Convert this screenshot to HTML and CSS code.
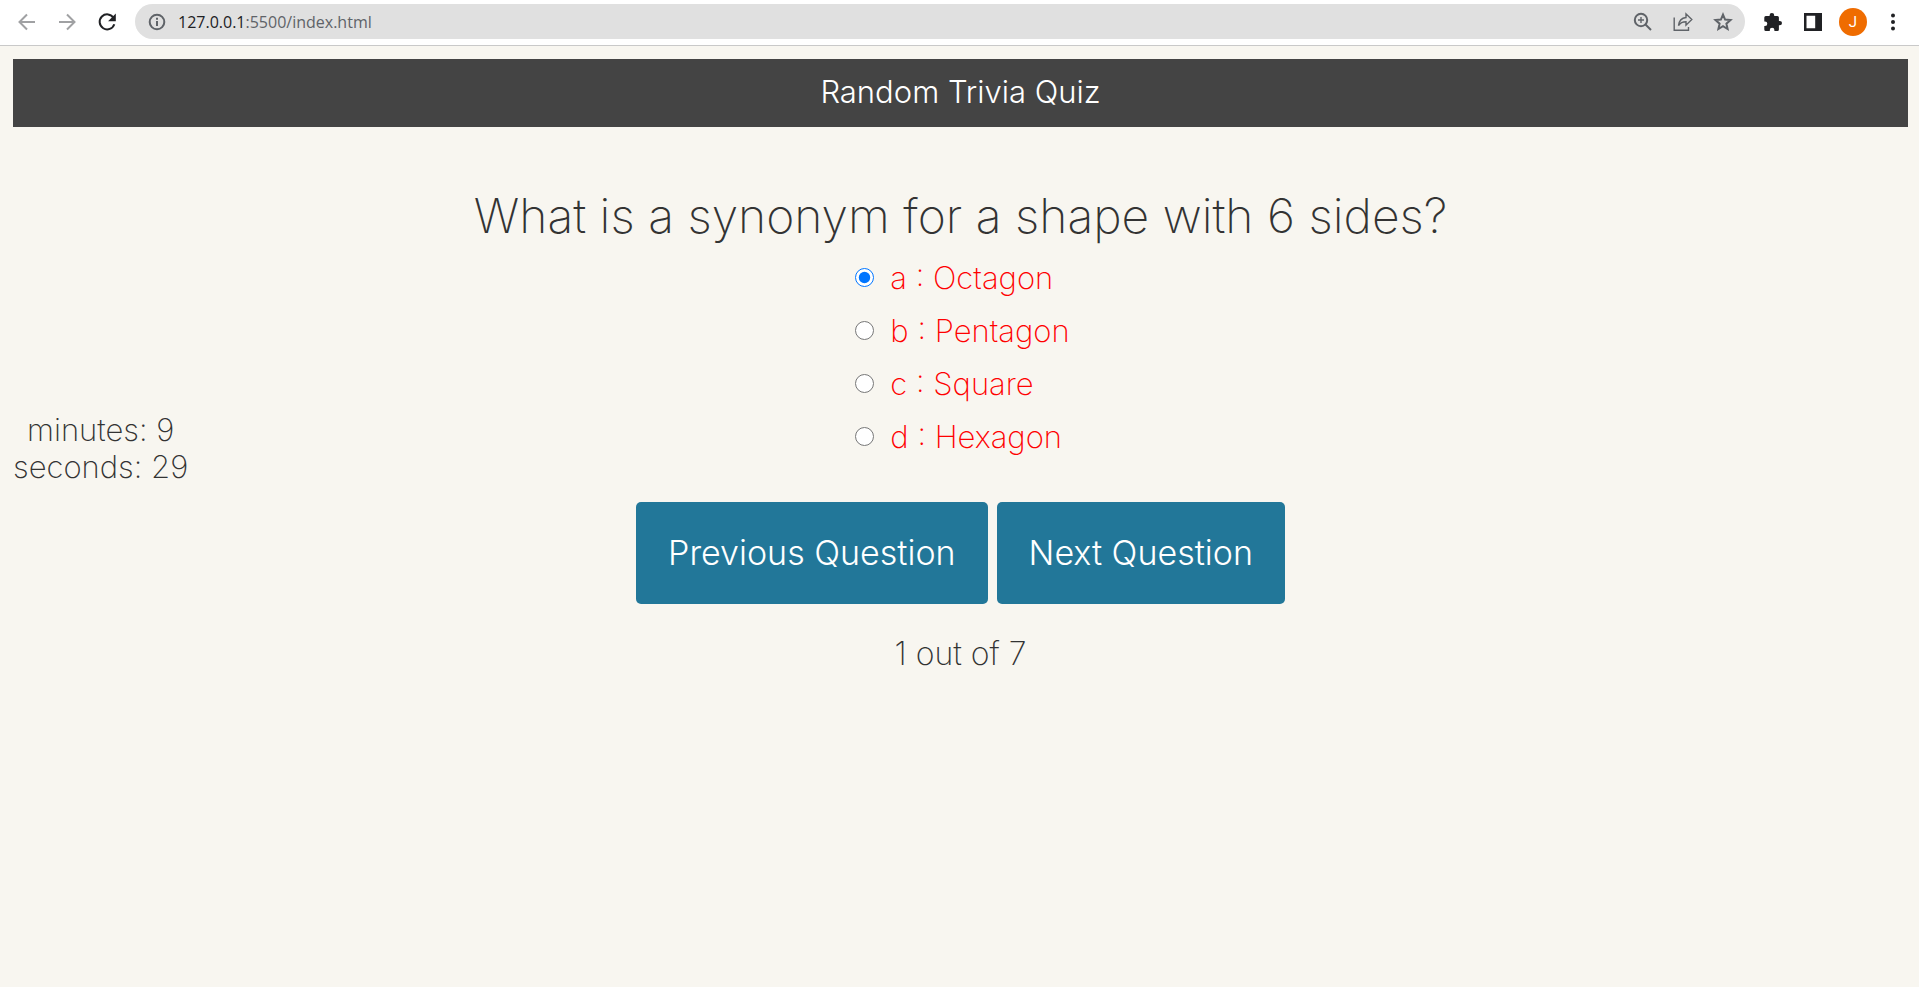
FILE: index.html
```html
<!DOCTYPE html>
<html lang="en">
<head>
<meta charset="utf-8">
<title>Random Trivia Quiz</title>
<link rel="stylesheet" href="styles.css">
</head>
<body>
<div class="toolbar">
  <button class="tool" aria-label="Back"><svg class="muted" viewBox="0 0 20 20"><path d="M18 10H3M10 2.500L2.500 10l7.500 7.500"/></svg></button>
  <button class="tool" aria-label="Forward"><svg class="muted" viewBox="0 0 20 20"><path d="M2 10h15M10 2.500l7.500 7.500-7.500 7.500"/></svg></button>
  <button class="tool" aria-label="Reload"><svg class="dark" viewBox="0 0 20 20"><path d="M16.600 6A7.500 7.500 0 1 0 17.300 12.200"/><path class="solid" d="M18.800 1.500v7.700h-7.700z"/></svg></button>
  <div class="address">
    <button class="inner" aria-label="Site information"><svg viewBox="0 0 20 20"><circle cx="10" cy="10" r="7.300"/><path d="M10 9v5M10 5.800v2"/></svg></button>
    <span class="url"><span class="host">127.0.0.1</span>:5500/index.html</span>
    <button class="inner" aria-label="Zoom"><svg viewBox="0 0 20 20"><circle cx="8" cy="8" r="6.200"/><path d="M12.500 12.500l5.500 5.500"/><path class="thin" d="M5 8h6M8 5v6"/></svg></button>
    <button class="inner" aria-label="Share"><svg class="fine" viewBox="0 0 20 20"><path d="M1.200 5.500v12.800h14.300V15M5.500 13.500c.6-5 3-7.500 7.500-8V1.800l5.800 5.700-5.800 5.700V9.800c-3.500 0-5.700 1-7.500 3.700z"/></svg></button>
    <button class="inner" aria-label="Bookmark"><svg viewBox="0 0 20 20"><path d="M10 2.600l2.100 5 5.400.5-4.100 3.600 1.200 5.300-4.600-2.800L5.400 17l1.200-5.300-4.100-3.600 5.400-.5z"/></svg></button>
  </div>
  <button class="tool" aria-label="Extensions"><svg class="fill" viewBox="0 0 20 20"><path d="M2.800 4H6.600V3.200a2.300 2.300 0 0 1 4.600 0V4H14.400a1.500 1.500 0 0 1 1.500 1.500v3.400h.9a2.200 2.200 0 0 1 0 4.400h-.9v4.200a1.500 1.500 0 0 1-1.500 1.500h-3V18a2.200 2.200 0 0 0-4.600 0v1H2.800a1.500 1.500 0 0 1-1.500-1.500v-3.500H2a2.300 2.300 0 0 0 0-4.600h-.7V5.500A1.500 1.500 0 0 1 2.800 4z"/></svg></button>
  <button class="tool" aria-label="Side panel"><svg class="fill" viewBox="0 0 20 20"><path fill-rule="evenodd" d="M1 1h18v18H1zM3.500 3.800v12.400h8.700V3.800z"/></svg></button>
  <button class="tool avatar" aria-label="Profile">J</button>
  <button class="tool" aria-label="Menu"><svg class="fill" viewBox="0 0 20 20"><circle cx="10" cy="3.500" r="2"/><circle cx="10" cy="10" r="2"/><circle cx="10" cy="16.500" r="2"/></svg></button>
</div>
<div class="page">
  <header class="banner">Random Trivia Quiz</header>
  <main class="quiz">
    <div class="timer"><div>minutes: 9</div><div>seconds: 29</div></div>
    <div class="content">
      <h1 class="question">What is a synonym for a shape with 6 sides?</h1>
      <form class="answers">
        <label class="answer"><input type="radio" name="answer" value="a" checked>a : Octagon</label>
        <label class="answer"><input type="radio" name="answer" value="b">b : Pentagon</label>
        <label class="answer"><input type="radio" name="answer" value="c">c : Square</label>
        <label class="answer"><input type="radio" name="answer" value="d">d : Hexagon</label>
      </form>
      <div class="actions">
        <button class="nav">Previous Question</button>
        <button class="nav">Next Question</button>
      </div>
      <div class="counter">1 out of 7</div>
    </div>
  </main>
</div>
</body>
</html>
```
FILE: styles.css
```css
* { box-sizing: border-box; }

body {
  margin: 0;
  min-height: 100vh;
  background: #f8f6f0;
  color: #333;
  font: 200 31px/37px Inter, "Liberation Sans", sans-serif;
}

button {
  border: 0;
  padding: 0;
  background: none;
  color: inherit;
  font: inherit;
}

.toolbar {
  display: flex;
  align-items: center;
  gap: 12px;
  height: 46px;
  padding: 0 12px 2px 13px;
  background: #fff;
  border-bottom: 1px solid #c9c9c9;
}

.tool {
  display: flex;
  align-items: center;
  justify-content: center;
  flex: none;
  width: 28px;
  height: 28px;
}

svg {
  width: 20px;
  height: 20px;
  fill: none;
  stroke: #5f6368;
  stroke-width: 2;
}
.muted { stroke: #a0a1a3; }
.dark { stroke: #202124; }
.fine { stroke-width: 1.4; }
.thin { stroke-width: 1.4; }
.solid { fill: #202124; stroke: none; }
.fill { fill: #202124; stroke: none; }

.address {
  display: flex;
  align-items: center;
  flex: 1;
  gap: 20px;
  height: 35px;
  margin: 0 2px;
  padding: 0 12px;
  border-radius: 18px;
  background: #e0e0e0;
}

.inner {
  display: flex;
  flex: none;
}

.url {
  flex: 1;
  margin-left: -9px;
  color: #5f6368;
  font: 400 16px/24px "Open Sans", "Noto Sans", sans-serif;
}
.host { color: #202124; }

.avatar {
  border-radius: 50%;
  background: #ef6c00;
  color: #fff;
  font: 400 15px/28px Roboto, sans-serif;
}

.page { padding: 13px 11px 0 13px; }

.banner {
  padding: 14px 0 17px;
  background: #444;
  color: #fff;
  font-weight: 300;
  text-align: center;
}

.quiz {
  display: grid;
  grid-template-columns: 1fr auto 1fr;
  align-items: center;
  padding-top: 62px;
}

.timer {
  justify-self: start;
  padding-top: 34px;
  text-align: center;
}

.content {
  display: flex;
  flex-direction: column;
  align-items: center;
}

.question {
  margin: 0;
  font-size: 48px;
  font-weight: 200;
  line-height: 54px;
}

.answers {
  display: flex;
  flex-direction: column;
  gap: 16px;
  padding: 16px 0 0 4px;
}

.answer {
  display: flex;
  align-items: center;
  gap: 16px;
  color: #f00;
}

.answer input {
  width: 19px;
  height: 19px;
  margin: 0;
  accent-color: #0075ff;
}

.actions {
  display: flex;
  gap: 9px;
  padding-top: 47px;
}

.nav {
  padding: 32px;
  border-radius: 5px;
  background: #227799;
  color: #fff;
  font-size: 34px;
  font-weight: 300;
  line-height: 38px;
}

.counter {
  padding-top: 31px;
  font-size: 32px;
}
```
